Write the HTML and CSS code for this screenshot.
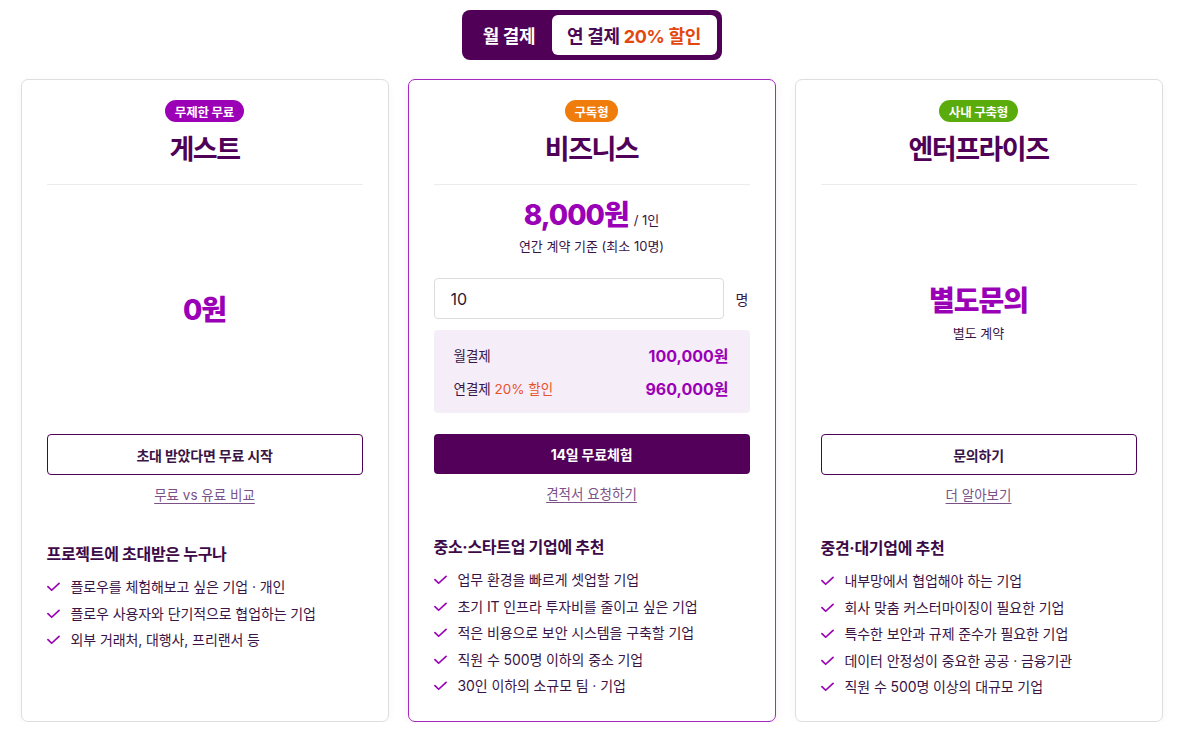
FILE: index.html
```html
<!DOCTYPE html>
<html lang="ko">
<head>
<meta charset="utf-8">
<title>요금제</title>
<link rel="stylesheet" href="styles.css">
</head>
<body>
<div class="page">
  <div class="toggle">
    <button class="toggle-btn toggle-btn--active">월 결제</button>
    <button class="toggle-btn toggle-btn--idle">연 결제 <span class="accent">20% 할인</span></button>
  </div>

  <div class="plans">
    <section class="card">
      <div class="card-head">
        <span class="badge badge--purple">무제한 무료</span>
        <h2 class="plan-name">게스트</h2>
      </div>
      <div class="card-body card-body--center">
        <div class="price">0원</div>
      </div>
      <button class="btn btn--outline">초대 받았다면 무료 시작</button>
      <a class="sub-link" href="#">무료 vs 유료 비교</a>
      <div class="card-foot card-foot--guest">
        <h3 class="foot-title">프로젝트에 초대받은 누구나</h3>
        <ul class="checks">
          <li><svg class="check" viewBox="0 0 14 10"><path d="M1 4.5 L5 8.5 L13 1"/></svg>플로우를 체험해보고 싶은 기업 · 개인</li>
          <li><svg class="check" viewBox="0 0 14 10"><path d="M1 4.5 L5 8.5 L13 1"/></svg>플로우 사용자와 단기적으로 협업하는 기업</li>
          <li><svg class="check" viewBox="0 0 14 10"><path d="M1 4.5 L5 8.5 L13 1"/></svg>외부 거래처, 대행사, 프리랜서 등</li>
        </ul>
      </div>
    </section>

    <section class="card card--featured">
      <div class="card-head">
        <span class="badge badge--orange">구독형</span>
        <h2 class="plan-name">비즈니스</h2>
      </div>
      <div class="card-body">
        <div class="price-line"><span class="price">8,000원</span><span class="per">/ 1인</span></div>
        <p class="price-note">연간 계약 기준 (최소 10명)</p>
        <div class="seat-row">
          <input class="seat-input" type="text" value="10">
          <span class="seat-unit">명</span>
        </div>
        <div class="summary">
          <div class="summary-row"><span>월결제</span><strong>100,000원</strong></div>
          <div class="summary-row"><span>연결제 <span class="accent-light">20% 할인</span></span><strong>960,000원</strong></div>
        </div>
      </div>
      <button class="btn btn--solid">14일 무료체험</button>
      <a class="sub-link" href="#">견적서 요청하기</a>
      <div class="card-foot">
        <h3 class="foot-title">중소·스타트업 기업에 추천</h3>
        <ul class="checks">
          <li><svg class="check" viewBox="0 0 14 10"><path d="M1 4.5 L5 8.5 L13 1"/></svg>업무 환경을 빠르게 셋업할 기업</li>
          <li><svg class="check" viewBox="0 0 14 10"><path d="M1 4.5 L5 8.5 L13 1"/></svg>초기 IT 인프라 투자비를 줄이고 싶은 기업</li>
          <li><svg class="check" viewBox="0 0 14 10"><path d="M1 4.5 L5 8.5 L13 1"/></svg>적은 비용으로 보안 시스템을 구축할 기업</li>
          <li><svg class="check" viewBox="0 0 14 10"><path d="M1 4.5 L5 8.5 L13 1"/></svg>직원 수 500명 이하의 중소 기업</li>
          <li><svg class="check" viewBox="0 0 14 10"><path d="M1 4.5 L5 8.5 L13 1"/></svg>30인 이하의 소규모 팀 · 기업</li>
        </ul>
      </div>
    </section>

    <section class="card">
      <div class="card-head">
        <span class="badge badge--green">사내 구축형</span>
        <h2 class="plan-name">엔터프라이즈</h2>
      </div>
      <div class="card-body card-body--center card-body--ent">
        <div class="price">별도문의</div>
        <p class="price-note price-note--ent">별도 계약</p>
      </div>
      <button class="btn btn--outline">문의하기</button>
      <a class="sub-link" href="#">더 알아보기</a>
      <div class="card-foot card-foot--ent">
        <h3 class="foot-title">중견·대기업에 추천</h3>
        <ul class="checks">
          <li><svg class="check" viewBox="0 0 14 10"><path d="M1 4.5 L5 8.5 L13 1"/></svg>내부망에서 협업해야 하는 기업</li>
          <li><svg class="check" viewBox="0 0 14 10"><path d="M1 4.5 L5 8.5 L13 1"/></svg>회사 맞춤 커스터마이징이 필요한 기업</li>
          <li><svg class="check" viewBox="0 0 14 10"><path d="M1 4.5 L5 8.5 L13 1"/></svg>특수한 보안과 규제 준수가 필요한 기업</li>
          <li><svg class="check" viewBox="0 0 14 10"><path d="M1 4.5 L5 8.5 L13 1"/></svg>데이터 안정성이 중요한 공공 · 금융기관</li>
          <li><svg class="check" viewBox="0 0 14 10"><path d="M1 4.5 L5 8.5 L13 1"/></svg>직원 수 500명 이상의 대규모 기업</li>
        </ul>
      </div>
    </section>
  </div>
</div>
</body>
</html>
```
FILE: styles.css
```css
* { box-sizing: border-box; }

body {
  margin: 0;
  background: #ffffff;
  font-family: Inter, "Noto Sans CJK KR", sans-serif;
  color: #3a1445;
}

.page {
  padding: 10px 3px 0 0;
  display: flex;
  flex-direction: column;
  align-items: center;
}

.toggle {
  display: flex;
  align-items: stretch;
  background: #510058;
  border-radius: 8px;
  padding: 5px;
  height: 50px;
  width: 260px;
}

.toggle-btn {
  border: 0;
  font-family: inherit;
  font-size: 18px;
  font-weight: 700;
  letter-spacing: -0.3px;
  cursor: pointer;
  border-radius: 6px;
  background: transparent;
}

.toggle-btn--active {
  color: #ffffff;
  width: 85px;
  padding: 0;
}

.toggle-btn--idle {
  flex: 1;
  background: #ffffff;
  color: #4a0a55;
  padding: 0;
}

.accent { color: #e4470e; }
.accent-light { color: #e8542a; }

.plans {
  margin-top: 19px;
  width: 1142px;
  display: grid;
  grid-template-columns: repeat(3, 1fr);
  gap: 19px;
}

.card {
  border: 1px solid #dedede;
  border-radius: 7px;
  padding: 20px 25px 24px;
  display: flex;
  flex-direction: column;
  align-items: stretch;
  box-shadow: 0 2px 8px rgba(0, 0, 0, 0.04);
  background: #fff;
}

.card--featured {
  border-color: #a52bc0;
  box-shadow: 0 2px 10px rgba(120, 0, 140, 0.08);
}

.card-head {
  display: flex;
  flex-direction: column;
  align-items: center;
  border-bottom: 1px solid #ececec;
  padding-bottom: 16px;
}

.badge {
  display: inline-flex;
  align-items: center;
  height: 22px;
  padding: 0 10px;
  border-radius: 11px;
  color: #fff;
  font-size: 12.5px;
  font-weight: 700;
  letter-spacing: -0.2px;
}
.badge--purple { background: #9b00b7; }
.badge--orange { background: #f07c0c; }
.badge--green { background: #5aab0c; }

.plan-name {
  margin: 10px 0 0;
  font-size: 27px;
  line-height: 36px;
  font-weight: 700;
  letter-spacing: -1.5px;
  color: #4f0057;
}

.card-body {
  height: 249px;
  display: flex;
  flex-direction: column;
  align-items: center;
  padding-top: 12px;
}

.card-body--center {
  justify-content: center;
  padding-top: 0;
}

.card-body--ent { padding-top: 6px; }

.price {
  font-size: 28px;
  line-height: 36px;
  font-weight: 800;
  letter-spacing: -1px;
  color: #9a00b6;
}

.price-line {
  display: flex;
  align-items: baseline;
  gap: 5px;
}

.per {
  font-size: 13px;
  color: #3a1445;
}

.price-note {
  margin: 3px 0 0;
  font-size: 13px;
  line-height: 20px;
  color: #3a1445;
}

.price-note--ent { margin-top: 4px; }

.seat-row {
  margin-top: 22px;
  width: 100%;
  display: flex;
  align-items: center;
  gap: 12px;
}

.seat-input {
  flex: 1;
  height: 41px;
  border: 1px solid #dcdcdc;
  border-radius: 4px;
  padding: 0 16px;
  font-family: inherit;
  font-size: 16px;
  color: #2a1a30;
  min-width: 0;
}

.seat-unit {
  font-size: 14px;
  color: #3a1445;
  width: 14px;
}

.summary {
  margin-top: 11px;
  width: 100%;
  background: #f5edf7;
  border-radius: 4px;
  padding: 14px 21px 12px 20px;
  display: flex;
  flex-direction: column;
  gap: 9px;
}

.summary-row {
  display: flex;
  justify-content: space-between;
  align-items: center;
  line-height: 24px;
  font-size: 13.5px;
  color: #3a1445;
}

.summary-row strong {
  font-size: 16px;
  font-weight: 700;
  color: #9a00b6;
}

.btn {
  height: 41px;
  border-radius: 4px;
  font-family: inherit;
  font-size: 14px;
  font-weight: 700;
  letter-spacing: -0.2px;
  cursor: pointer;
}

.btn--outline {
  background: #fff;
  border: 1px solid #4f0057;
  color: #3a1445;
}

.btn--solid {
  height: 40px;
  background: #520059;
  border: 0;
  color: #fff;
}

.sub-link {
  align-self: center;
  margin-top: 10px;
  font-size: 13.5px;
  line-height: 20px;
  color: #7a5288;
  text-decoration: underline;
  text-underline-offset: 3px;
}

.card-foot {
  margin-top: 31px;
}
.card-foot--guest { margin-top: 37px; }
.card-foot--ent { margin-top: 31px; }

.foot-title {
  margin: 0;
  font-size: 16px;
  line-height: 24px;
  font-weight: 700;
  letter-spacing: -0.3px;
  color: #3d0a48;
}

.checks {
  list-style: none;
  margin: 11px 0 0;
  padding: 0;
  display: flex;
  flex-direction: column;
  gap: 6.5px;
}

.checks li {
  display: flex;
  align-items: center;
  font-size: 14px;
  line-height: 20px;
  letter-spacing: -0.1px;
  color: #3a1445;
}

.check {
  width: 13px;
  height: 10px;
  margin-right: 11px;
  flex: none;
  fill: none;
  stroke: #9a00b6;
  stroke-width: 1.8;
  stroke-linecap: round;
  stroke-linejoin: round;
}
```
